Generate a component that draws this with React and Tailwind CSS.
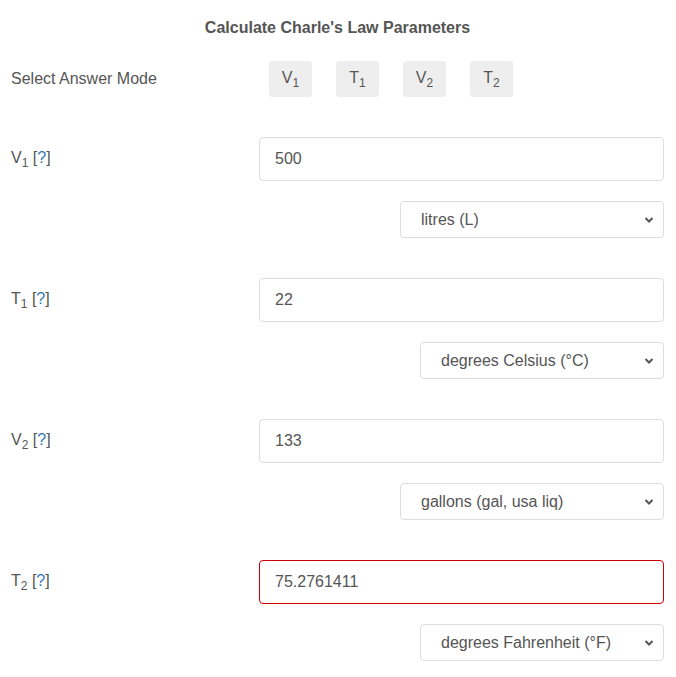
import React, { useState } from 'react';

const Chevron = () => (
  <svg
    className="pointer-events-none absolute right-[10px] top-1/2 -translate-y-1/2"
    width="10"
    height="7"
    viewBox="0 0 10 7"
    fill="none"
  >
    <path d="M1.5 1.5 L5 5 L8.5 1.5" stroke="#555" strokeWidth="2" />
  </svg>
);

const Sym = ({ base, sub }) => (
  <>
    {base}
    <sub className="text-[12px] align-baseline relative top-[4px]">{sub}</sub>
  </>
);

const rows = [
  { base: 'V', sub: '1', value: '500', unit: 'litres (L)', w: 'w-[264px]' },
  { base: 'T', sub: '1', value: '22', unit: 'degrees Celsius (°C)', w: 'w-[244px]' },
  { base: 'V', sub: '2', value: '133', unit: 'gallons (gal, usa liq)', w: 'w-[264px]' },
  { base: 'T', sub: '2', value: '75.2761411', unit: 'degrees Fahrenheit (°F)', w: 'w-[244px]', answer: true }
];

const App = () => {
  const [mode, setMode] = useState('T2');

  return (
    <div
      className="w-[676px] bg-white pl-[11px] pr-[12px] text-[16px] text-[#555]"
      style={{ fontFamily: '"Liberation Sans", Arial, sans-serif' }}
    >
      {/* title */}
      <div className="flex h-[56px] items-center justify-center font-bold">
        Calculate Charle's Law Parameters
      </div>

      {/* answer mode */}
      <div className="mt-[5px] flex h-[36px] items-center">
        <div className="w-[248px]">Select Answer Mode</div>
        <div className="ml-[10px] flex gap-[24px]">
          {['V1', 'T1', 'V2', 'T2'].map((m) => (
            <button
              key={m}
              onClick={() => setMode(m)}
              className="flex h-[36px] w-[43px] items-center justify-center rounded-[3px] bg-[#eee] pb-[3px] text-[#555]"
            >
              <span>
                <Sym base={m[0]} sub={m[1]} />
              </span>
            </button>
          ))}
        </div>
      </div>

      {/* parameters */}
      <div className="mt-[40px] flex flex-col gap-[40px]">
        {rows.map((r) => (
          <div key={r.base + r.sub} className="flex flex-col gap-[20px]">
            <div className="flex items-center">
              <div className="w-[248px] pb-[2px]">
                <Sym base={r.base} sub={r.sub} /> [<span className="text-[#337ab7]">?</span>]
              </div>
              <input
                type="text"
                defaultValue={r.value}
                className={`h-[44px] flex-1 rounded-[4px] border bg-white px-[15px] text-[16px] text-[#555] outline-none ${
                  r.answer ? 'border-[#c00]' : 'border-[#ddd]'
                }`}
              />
            </div>
            <div className="flex justify-end">
              <div className={`relative ${r.w}`}>
                <select
                  defaultValue={r.unit}
                  className="h-[37px] w-full appearance-none rounded-[4px] border border-[#ddd] bg-white pl-[20px] text-[16px] text-[#555] outline-none"
                >
                  <option>{r.unit}</option>
                </select>
                <Chevron />
              </div>
            </div>
          </div>
        ))}
      </div>
      <div className="h-[16px]" />
    </div>
  );
};

export default App;
